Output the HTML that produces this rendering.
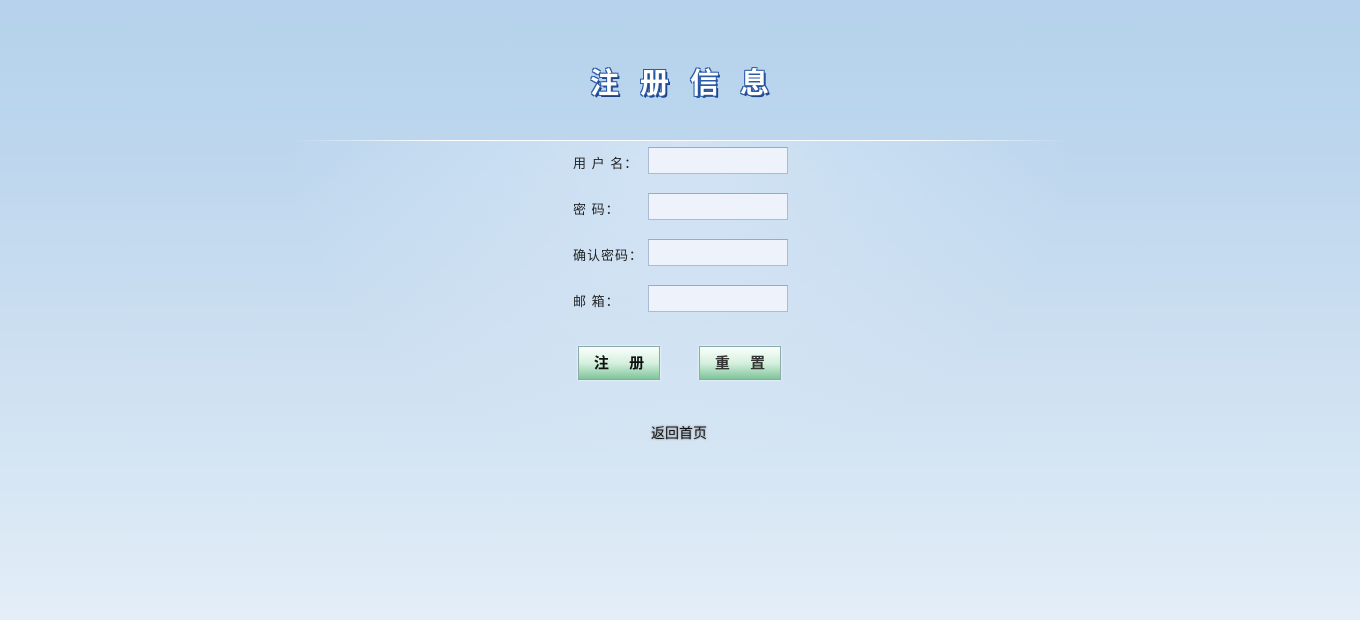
<!DOCTYPE html>
<html><head><meta charset="utf-8"><style>
body{margin:0;width:1360px;height:620px;overflow:hidden;position:relative;
background:linear-gradient(to bottom,#b5d2ec 0px,#bcd6ee 140px,#c9ddf0 300px,#d6e6f4 480px,#e4eef8 620px);
font-family:"Liberation Sans","Noto Sans CJK SC",sans-serif;}
.glow{position:absolute;left:280px;top:140px;width:800px;height:330px;background:radial-gradient(ellipse at center top,rgba(230,240,250,.5),rgba(230,240,250,0) 70%);}
.line{position:absolute;left:290px;top:140px;width:780px;height:1px;background:linear-gradient(to right,rgba(255,255,255,0),#fff 20%,#fff 80%,rgba(255,255,255,0));}
.title{position:absolute;left:590px;top:60px;font-size:29px;font-weight:bold;color:#fff;letter-spacing:21px;
text-shadow:-1px -1px 0 #2a5aa8,1px -1px 0 #2a5aa8,-1px 1px 0 #2a5aa8,1px 1px 0 #2a5aa8,2px 2px 0 #1c3f80;}
.lab{position:absolute;left:573px;font-size:13px;color:#222;letter-spacing:1px;}
.inp{position:absolute;left:648px;width:140px;height:27px;background:#eef3fb;border:1px solid #a9bcd4;border-top-color:#98aac4;box-sizing:border-box;}
.btn{position:absolute;top:346px;width:82px;height:34px;box-sizing:border-box;border:1px solid #8aa;background:linear-gradient(to bottom,#fafffc,#d6f0de 50%,#7fc49a);
font-size:15px;font-weight:bold;text-align:center;line-height:34px;letter-spacing:4px;text-indent:4px;box-shadow:0 0 2px #fff;}
.back{position:absolute;left:651px;top:423px;font-size:14px;color:#111;text-shadow:0 0 2px #777;}
</style></head><body>
<div class="glow"></div>
<div class="title">注册信息</div>
<div class="line"></div>
<div class="lab" style="top:153px">用 户 名：</div><div class="inp" style="top:147px"></div>
<div class="lab" style="top:199px">密 码：</div><div class="inp" style="top:193px"></div>
<div class="lab" style="top:245px">确认密码：</div><div class="inp" style="top:239px"></div>
<div class="lab" style="top:291px">邮 箱：</div><div class="inp" style="top:285px"></div>
<div class="btn" style="left:578px;color:#111">注&nbsp; 册</div>
<div class="btn" style="left:699px;color:#333">重&nbsp; 置</div>
<div class="back">返回首页</div>
</body></html>
